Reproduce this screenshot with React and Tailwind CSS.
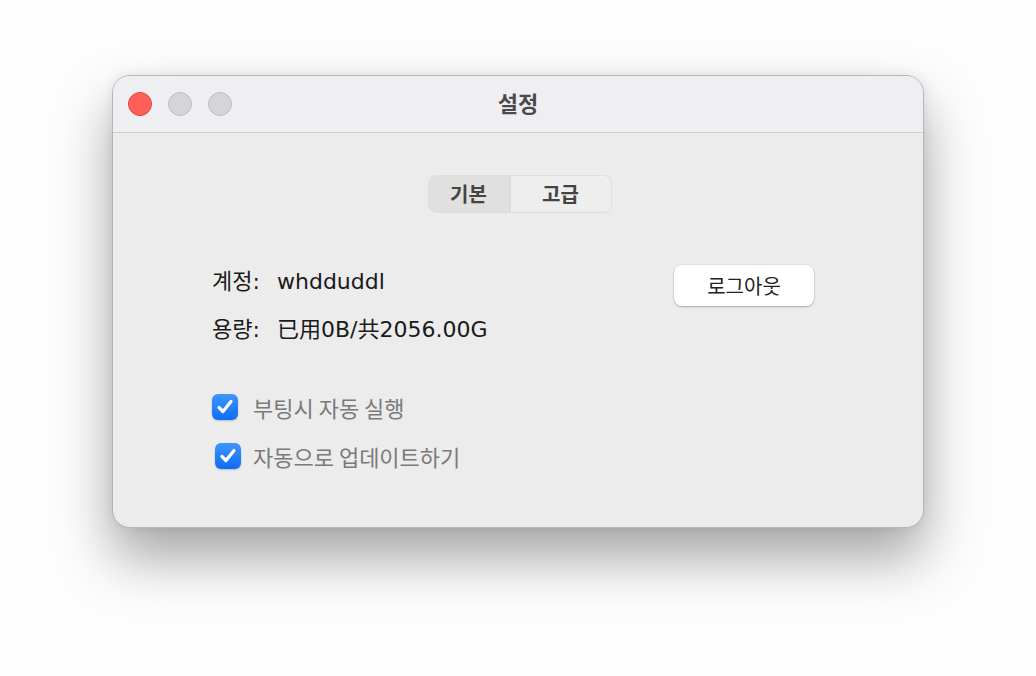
import React, { useState } from 'react';

const font = { fontFamily: '"Noto Sans CJK KR", "Noto Sans", sans-serif' };
const bodyFont = { fontFamily: '"DejaVu Sans", "Noto Sans CJK KR", sans-serif' };

const Light = ({ color }) => (
    <span className={`w-[24px] h-[24px] rounded-full border ${color}`} />
);

const Check = ({ checked, onChange, label, boxClass = "" }) => (
    <label className="flex items-center cursor-pointer">
        <span className="w-[41px] flex">
            <span
                onClick={onChange}
                className={`w-[26px] h-[26px] rounded-[6px] flex items-center justify-center shadow-[0_1px_2px_rgba(0,0,0,0.2)] ${boxClass} ${
                    checked ? 'bg-gradient-to-b from-[#3d96fc] to-[#0a6cf5]' : 'bg-white border border-gray-300'
                }`}
            >
                {checked && (
                    <svg width="20" height="20" viewBox="0 0 20 20">
                        <path d="M4 10.5 L8 14.5 L16 4.5" fill="none" stroke="white" strokeWidth="3.2" strokeLinecap="round" strokeLinejoin="round" />
                    </svg>
                )}
            </span>
        </span>
        <span className="text-[22px] text-[#7a7a7a] leading-none">{label}</span>
    </label>
);

export default function App() {
    const [tab, setTab] = useState('basic');
    const [boot, setBoot] = useState(true);
    const [update, setUpdate] = useState(true);

    return (
        <div style={font} className="w-[1036px] h-[676px] bg-[#fdfdfd] pt-[75px] pl-[112px] overflow-hidden">
            <div className="w-[812px] h-[453px] rounded-[18px] border border-[#b5b5b5] bg-[#ececec] overflow-hidden flex flex-col shadow-[0_30px_55px_rgba(0,0,0,0.35),0_0_12px_rgba(0,0,0,0.08)]">
                {/* Title bar */}
                <div className="relative h-[57px] bg-[#efeef3] border-b border-[#cfcfcf] flex items-center pl-[15px] gap-[16px] shrink-0">
                    <Light color="bg-[#fe5f57] border-[#e0443e]" />
                    <Light color="bg-[#d6d5da] border-[#bdbcc1]" />
                    <Light color="bg-[#d6d5da] border-[#bdbcc1]" />
                    <div className="absolute inset-0 flex items-center justify-center pb-[4px] pointer-events-none">
                        <span className="text-[22px] font-bold text-[#4a4a4a]">설정</span>
                    </div>
                </div>

                {/* Tabs */}
                <div className="flex justify-center pt-[42px] pl-[3px]">
                    <div className="flex h-[38px] rounded-[8px] border border-[#dedede] bg-[#eeeeee] overflow-hidden">
                        <button
                            onClick={() => setTab('basic')}
                            className={`w-[80px] text-[20px] font-bold text-[#444] ${tab === 'basic' ? 'bg-[#e0e0e0]' : ''}`}
                        >
                            기본
                        </button>
                        <div className="w-[2px] bg-[#dcdcdc]" />
                        <button
                            onClick={() => setTab('adv')}
                            className={`w-[100px] text-[20px] font-bold text-[#444] ${tab === 'adv' ? 'bg-[#e0e0e0]' : ''}`}
                        >
                            고급
                        </button>
                    </div>
                </div>

                {/* Account info */}
                <div className="flex pl-[99px] pr-[109px] pt-[52px]">
                    <div style={bodyFont} className="flex flex-col gap-[26px] flex-1 text-[22px] text-[#1a1a1a] leading-none">
                        <div className="flex pt-[6px]">
                            <span className="w-[65px]">계정:</span>
                            <span>whdduddl</span>
                        </div>
                        <div className="flex">
                            <span className="w-[65px]">용량:</span>
                            <span>已用0B/共2056.00G</span>
                        </div>
                    </div>
                    <button className="w-[140px] h-[41px] rounded-[8px] bg-white text-[20px] text-[#222] shadow-[0_1px_2px_rgba(0,0,0,0.25),0_0_0_0.5px_rgba(0,0,0,0.08)]">
                        로그아웃
                    </button>
                </div>

                {/* Options */}
                <div className="flex flex-col gap-[23px] pl-[99px] pt-[53px]">
                    <Check checked={boot} onChange={() => setBoot(!boot)} label="부팅시 자동 실행" />
                    <Check checked={update} onChange={() => setUpdate(!update)} label="자동으로 업데이트하기" boxClass="ml-[3px]" />
                </div>
            </div>
        </div>
    );
}
